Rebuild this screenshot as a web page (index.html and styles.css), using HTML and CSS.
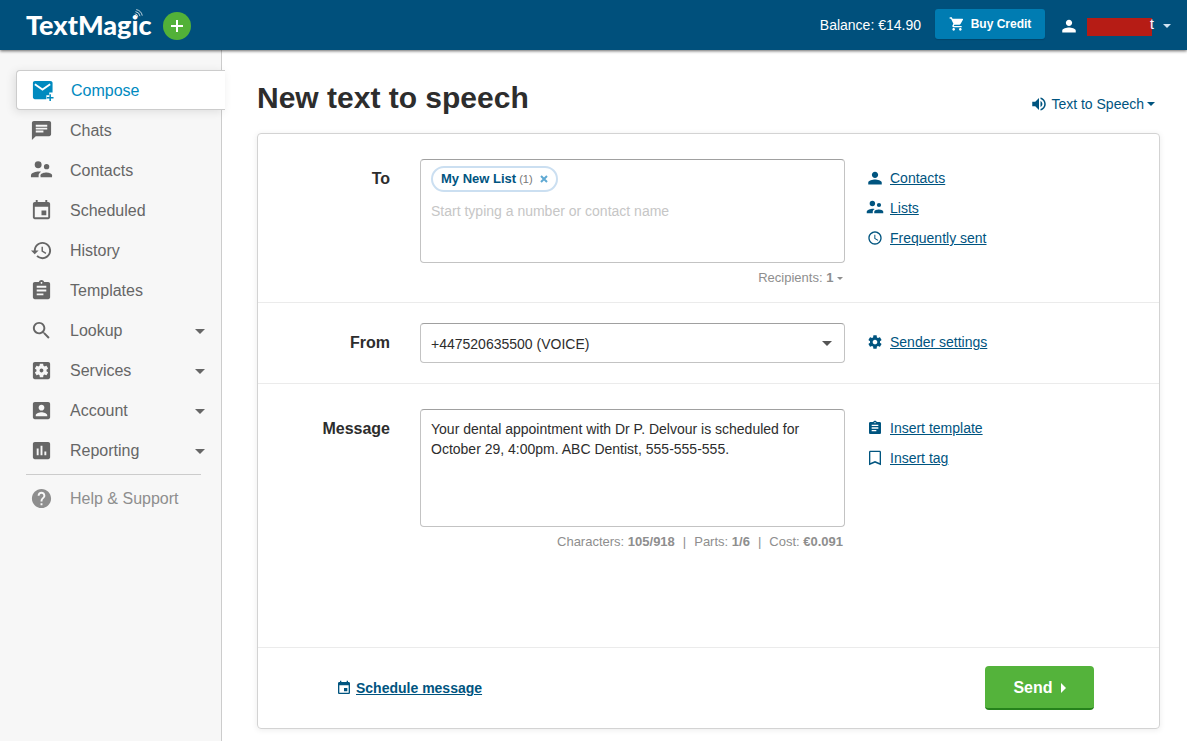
FILE: index.html
```
<!DOCTYPE html>
<html lang="en">
<head>
<meta charset="utf-8">
<title>New text to speech</title>
<link rel="stylesheet" href="styles.css">
</head>
<body>
<svg class="sprite" aria-hidden="true">
  <symbol id="i-compose" viewBox="0 0 24 24"><path d="M20 2H4c-1.100 0-2 .9-2 2v15c0 1.100.9 2 2 2h12v-4h3v-3h3.500V4c0-1.100-.9-2-2.500-2z"/><path d="M4 5.500l8 5.500 8-5.500" fill="none" stroke="#fff" stroke-width="2"/><path d="M19.200 16h1.600v2.700H23.500v1.600h-2.700V23h-1.600v-2.700h-2.700v-1.600h2.700z"/></symbol>
  <symbol id="i-chat" viewBox="0 0 24 24"><path d="M20 2H4c-1.100 0-1.990.9-1.990 2L2 22l4-4h14c1.100 0 2-.9 2-2V4c0-1.100-.9-2-2-2zM6 9h12v2H6V9zm8 5H6v-2h8v2zm4-6H6V6h12v2z"/></symbol>
  <symbol id="i-people" viewBox="0 0 24 24"><circle cx="8.500" cy="6" r="3.600"/><circle cx="17.300" cy="8" r="2.800"/><path d="M17 14c-1.830 0-6 .9-6 2.900V19h12v-2.100c0-2-4.170-2.900-6-2.900z"/><path d="M9 13c-2.500 0-8 1.200-8 4v2h8v-2.100c0-1 .4-2.400 2.600-3.700C10.600 13 9.700 13 9 13z"/></symbol>
  <symbol id="i-calendar" viewBox="0 0 24 24"><path d="M17 12h-5v5h5v-5zM16 1v2H8V1H6v2H5c-1.110 0-1.990.9-1.990 2L3 19c0 1.100.89 2 2 2h14c1.100 0 2-.9 2-2V5c0-1.100-.9-2-2-2h-1V1h-2zm3 18H5V8h14v11z"/></symbol>
  <symbol id="i-history" viewBox="0 0 24 24"><path d="M13 3c-4.970 0-9 4.030-9 9H1l3.890 3.890.07.14L9 12H6c0-3.870 3.130-7 7-7s7 3.130 7 7-3.130 7-7 7c-1.930 0-3.680-.79-4.940-2.060l-1.420 1.420C8.270 19.990 10.510 21 13 21c4.970 0 9-4.030 9-9s-4.030-9-9-9zm-1 5v5l4.280 2.540.72-1.210-3.500-2.080V8H12z"/></symbol>
  <symbol id="i-clipboard" viewBox="0 0 24 24"><path d="M19 3h-4.180C14.400 1.840 13.300 1 12 1c-1.300 0-2.400.84-2.820 2H5c-1.100 0-2 .9-2 2v14c0 1.100.9 2 2 2h14c1.100 0 2-.9 2-2V5c0-1.100-.9-2-2-2zm-7 0c.55 0 1 .45 1 1s-.45 1-1 1-1-.45-1-1 .45-1 1-1zm2 14H7v-2h7v2zm3-4H7v-2h10v2zm0-4H7V7h10v2z"/></symbol>
  <symbol id="i-search" viewBox="0 0 24 24"><path d="M15.500 14h-.79l-.28-.27C15.410 12.590 16 11.110 16 9.500 16 5.910 13.090 3 9.500 3S3 5.910 3 9.500 5.910 16 9.500 16c1.610 0 3.090-.59 4.230-1.570l.27.28v.79l5 4.990L20.490 19l-4.990-5zm-6 0C7.010 14 5 11.990 5 9.500S7.010 5 9.500 5 14 7.010 14 9.500 11.990 14 9.500 14z"/></symbol>
  <symbol id="i-services" viewBox="0 0 24 24"><path d="M12 10c-1.100 0-2 .9-2 2s.9 2 2 2 2-.9 2-2-.9-2-2-2zm7-7H5c-1.110 0-2 .9-2 2v14c0 1.100.89 2 2 2h14c1.110 0 2-.9 2-2V5c0-1.100-.89-2-2-2zm-1.750 9c0 .23-.02.46-.05.68l1.480 1.160c.13.11.17.3.08.45l-1.400 2.420c-.09.15-.27.21-.43.15l-1.740-.7c-.36.28-.76.51-1.180.69l-.26 1.850c-.03.17-.18.3-.35.3h-2.800c-.17 0-.32-.13-.35-.29l-.26-1.850c-.43-.18-.82-.41-1.180-.69l-1.740.7c-.16.06-.34 0-.43-.15l-1.400-2.420c-.09-.15-.05-.34.08-.45l1.480-1.160c-.03-.23-.05-.46-.05-.69 0-.23.02-.46.05-.68l-1.480-1.160c-.13-.11-.17-.3-.08-.45l1.400-2.420c.09-.15.27-.21.43-.15l1.740.7c.36-.28.76-.51 1.180-.69l.26-1.850c.03-.17.18-.3.35-.3h2.800c.17 0 .32.13.35.29l.26 1.850c.43.18.82.41 1.180.69l1.740-.7c.16-.06.34 0 .43.15l1.400 2.420c.09.15.05.34-.08.45l-1.480 1.160c.03.23.05.46.05.69z"/></symbol>
  <symbol id="i-account" viewBox="0 0 24 24"><path d="M3 5v14c0 1.100.89 2 2 2h14c1.100 0 2-.9 2-2V5c0-1.100-.9-2-2-2H5c-1.110 0-2 .9-2 2zm12 4c0 1.660-1.340 3-3 3s-3-1.340-3-3 1.340-3 3-3 3 1.340 3 3zm-9 8c0-2 4-3.100 6-3.100s6 1.100 6 3.100v1H6v-1z"/></symbol>
  <symbol id="i-report" viewBox="0 0 24 24"><path d="M19 3H5c-1.100 0-2 .9-2 2v14c0 1.100.9 2 2 2h14c1.100 0 2-.9 2-2V5c0-1.100-.9-2-2-2zM9 17H7v-7h2v7zm4 0h-2V7h2v10zm4 0h-2v-4h2v4z"/></symbol>
  <symbol id="i-help" viewBox="0 0 24 24"><path d="M12 2C6.480 2 2 6.480 2 12s4.480 10 10 10 10-4.480 10-10S17.520 2 12 2zm1 17h-2v-2h2v2zm2.070-7.750l-.9.920C13.450 12.900 13 13.500 13 15h-2v-.5c0-1.100.45-2.100 1.170-2.830l1.240-1.260c.37-.36.59-.86.59-1.410 0-1.100-.9-2-2-2s-2 .9-2 2H8c0-2.210 1.790-4 4-4s4 1.790 4 4c0 .88-.36 1.680-.93 2.250z"/></symbol>
  <symbol id="i-person" viewBox="0 0 24 24"><path d="M12 12c2.400 0 4.200-1.900 4.200-4.200S14.400 3.500 12 3.500 7.800 5.500 7.800 7.800 9.600 12 12 12zm0 2c-3 0-9 1.300-9 4v2.500h18V18c0-2.700-6-4-9-4z"/></symbol>
  <symbol id="i-cart" viewBox="0 0 24 24"><path d="M7 18c-1.100 0-1.990.9-1.990 2S5.900 22 7 22s2-.9 2-2-.9-2-2-2zM1 2v2h2l3.600 7.590-1.350 2.450c-.16.28-.25.61-.25.96 0 1.100.9 2 2 2h12v-2H7.420c-.14 0-.25-.11-.25-.25l.03-.12.9-1.630h7.450c.75 0 1.410-.41 1.750-1.030l3.580-6.490A1 1 0 0 0 20 4H5.210l-.94-2H1zm16 16c-1.100 0-1.990.9-1.990 2s.89 2 1.990 2 2-.9 2-2-.9-2-2-2z"/></symbol>
  <symbol id="i-speaker" viewBox="0 0 24 24"><path d="M3 9v6h4l5 5V4L7 9H3zm13.500 3c0-1.770-1.020-3.290-2.500-4.030v8.050c1.480-.73 2.500-2.250 2.500-4.020zM14 3.230v2.060c2.890.86 5 3.540 5 6.710s-2.110 5.850-5 6.710v2.060c4.010-.91 7-4.490 7-8.770s-2.990-7.860-7-8.770z"/></symbol>
  <symbol id="i-clock" viewBox="0 0 24 24"><path d="M12 2C6.500 2 2 6.500 2 12s4.500 10 10 10 10-4.500 10-10S17.500 2 12 2zm0 18c-4.420 0-8-3.580-8-8s3.580-8 8-8 8 3.580 8 8-3.580 8-8 8zm.5-13H11v6l5.200 3.200.8-1.300-4.500-2.700V7z"/></symbol>
  <symbol id="i-gear" viewBox="0 0 24 24"><path d="M19.430 12.980c.04-.32.070-.64.070-.98s-.03-.66-.07-.98l2.110-1.650c.19-.15.240-.42.120-.64l-2-3.460c-.12-.22-.39-.3-.61-.22l-2.490 1c-.52-.4-1.080-.73-1.690-.98l-.38-2.650C14.460 2.180 14.250 2 14 2h-4c-.25 0-.46.18-.49.42l-.38 2.650c-.61.25-1.170.59-1.690.98l-2.490-1c-.23-.09-.49 0-.61.22l-2 3.460c-.13.22-.07.49.12.64l2.110 1.650c-.04.32-.07.65-.07.98s.03.66.07.98l-2.110 1.650c-.19.15-.24.42-.12.64l2 3.460c.12.22.39.3.61.22l2.490-1c.52.4 1.080.73 1.690.98l.38 2.650c.03.24.24.42.49.42h4c.25 0 .46-.18.49-.42l.38-2.650c.61-.25 1.170-.59 1.690-.98l2.490 1c.23.09.49 0 .61-.22l2-3.460c.12-.22.070-.49-.12-.64l-2.110-1.650zM12 15.500c-1.930 0-3.500-1.570-3.500-3.500s1.570-3.500 3.500-3.500 3.500 1.570 3.500 3.500-1.570 3.500-3.500 3.500z"/></symbol>
  <symbol id="i-tag" viewBox="0 0 24 24"><path d="M19 1H5c-1.100 0-2 .9-2 2v20l9-4 9 4V3c0-1.100-.9-2-2-2zm0 18.500l-7-3-7 3V3h14v16.500z"/></symbol>
</svg>

<header class="topbar">
  <a class="logo" href="#">TextMagic
    <svg class="logo-waves" viewBox="0 0 12 12" aria-hidden="true"><path d="M1 6.500a4 4 0 0 1 4 4M2 3.500a7 7 0 0 1 6 6M3 .8a10 10 0 0 1 8 8"/></svg>
  </a>
  <button class="add" type="button" aria-label="Add"><svg viewBox="0 0 28 28" aria-hidden="true"><path d="M14 8v12M8 14h12"/></svg></button>
  <span class="balance">Balance: €14.90</span>
  <button class="buy" type="button"><svg class="icon icon-16"><use href="#i-cart"/></svg>Buy Credit</button>
  <button class="user" type="button" aria-label="Account menu">
    <svg class="icon icon-18"><use href="#i-person"/></svg>
    <span class="user-name">t</span>
    <span class="caret"></span>
  </button>
</header>

<div class="shell">
  <nav class="sidebar">
    <a class="item active" href="#"><svg class="icon icon-nav"><use href="#i-compose"/></svg>Compose</a>
    <a class="item" href="#"><svg class="icon icon-nav"><use href="#i-chat"/></svg>Chats</a>
    <a class="item" href="#"><svg class="icon icon-nav"><use href="#i-people"/></svg>Contacts</a>
    <a class="item" href="#"><svg class="icon icon-nav"><use href="#i-calendar"/></svg>Scheduled</a>
    <a class="item" href="#"><svg class="icon icon-nav"><use href="#i-history"/></svg>History</a>
    <a class="item" href="#"><svg class="icon icon-nav"><use href="#i-clipboard"/></svg>Templates</a>
    <a class="item" href="#"><svg class="icon icon-nav"><use href="#i-search"/></svg>Lookup<span class="caret caret-lg"></span></a>
    <a class="item" href="#"><svg class="icon icon-nav"><use href="#i-services"/></svg>Services<span class="caret caret-lg"></span></a>
    <a class="item" href="#"><svg class="icon icon-nav"><use href="#i-account"/></svg>Account<span class="caret caret-lg"></span></a>
    <a class="item" href="#"><svg class="icon icon-nav"><use href="#i-report"/></svg>Reporting<span class="caret caret-lg"></span></a>
    <hr class="divider">
    <a class="item muted" href="#"><svg class="icon icon-nav"><use href="#i-help"/></svg>Help &amp; Support</a>
  </nav>

  <main class="main">
    <div class="heading">
      <h1 class="title">New text to speech</h1>
      <button class="mode" type="button"><svg class="icon icon-18"><use href="#i-speaker"/></svg>Text to Speech<span class="caret"></span></button>
    </div>

    <form class="card">
      <div class="row">
        <label class="label" for="to">To</label>
        <div class="field">
          <div class="recipients">
            <span class="chip">My New List <span class="count">(1)</span>
              <button class="remove" type="button" aria-label="Remove My New List"><svg viewBox="0 0 8 8" aria-hidden="true"><path d="M1 1l6 6M7 1l-6 6"/></svg></button>
            </span>
            <input class="to-input" id="to" type="text" placeholder="Start typing a number or contact name">
          </div>
          <div class="hint">Recipients: <b>1</b> <span class="caret caret-sm"></span></div>
        </div>
        <div class="links">
          <div class="link"><svg class="icon icon-18"><use href="#i-person"/></svg><a href="#">Contacts</a></div>
          <div class="link"><svg class="icon icon-18"><use href="#i-people"/></svg><a href="#">Lists</a></div>
          <div class="link"><svg class="icon icon-16"><use href="#i-clock"/></svg><a href="#">Frequently sent</a></div>
        </div>
      </div>

      <div class="row row-from">
        <label class="label" for="from">From</label>
        <div class="field select-wrap">
          <select class="select" id="from"><option>+447520635500 (VOICE)</option></select>
          <span class="caret caret-lg select-caret"></span>
        </div>
        <div class="links">
          <div class="link"><svg class="icon icon-16"><use href="#i-gear"/></svg><a href="#">Sender settings</a></div>
        </div>
      </div>

      <div class="row row-message">
        <label class="label" for="message">Message</label>
        <div class="field">
          <textarea class="textarea" id="message">Your dental appointment with Dr P. Delvour is scheduled for October 29, 4:00pm. ABC Dentist, 555-555-555.</textarea>
          <div class="hint"><span>Characters: <b>105/918</b></span><span class="bar">|</span><span>Parts: <b>1/6</b></span><span class="bar">|</span><span>Cost: <b>€0.091</b></span></div>
        </div>
        <div class="links">
          <div class="link"><svg class="icon icon-16"><use href="#i-clipboard"/></svg><a href="#">Insert template</a></div>
          <div class="link"><svg class="icon icon-16"><use href="#i-tag"/></svg><a href="#">Insert tag</a></div>
        </div>
      </div>

      <div class="actions">
        <div class="schedule"><svg class="icon icon-16"><use href="#i-calendar"/></svg><a href="#">Schedule message</a></div>
        <button class="send" type="button">Send<span class="arrow"></span></button>
      </div>
    </form>
  </main>
</div>
</body>
</html>
```
FILE: styles.css
```
* { box-sizing: border-box; }

body {
  margin: 0;
  min-height: 100vh;
  display: flex;
  flex-direction: column;
  background: #fff;
  color: #2d2d2d;
  font: 14px/20px "Liberation Sans", Arial, sans-serif;
}

button { margin: 0; padding: 0; border: 0; background: none; font: inherit; color: inherit; }
a { color: #00547f; }

.sprite { position: absolute; width: 0; height: 0; }
.icon { flex: none; fill: currentColor; }
.icon-16 { width: 16px; height: 16px; }
.icon-18 { width: 18px; height: 18px; }
.icon-nav { width: 23px; height: 23px; margin: 0 17px 2px 0; }

.caret {
  flex: none;
  display: inline-block;
  border: 4px solid transparent;
  border-top-color: currentColor;
  border-bottom: 0;
}
.caret-sm { border-width: 3px 3px 0; }
.caret-lg { border-width: 5px 5px 0; }

/* Top bar */
.topbar {
  position: relative;
  z-index: 2;
  display: flex;
  align-items: center;
  height: 50px;
  padding: 0 16px 0 26px;
  background: #00507c;
  box-shadow: 0 1px 3px rgba(0, 0, 0, .6);
  color: #fff;
}
.logo {
  position: relative;
  margin-right: 11px;
  color: #fff;
  font: 900 27px/50px Lato, sans-serif;
  text-decoration: none;
}
.logo-waves {
  position: absolute;
  top: 9px;
  right: 9px;
  width: 9px;
  height: 9px;
  fill: none;
  stroke: #fff;
}
.add { width: 28px; height: 28px; margin: 2px auto 0 0; border-radius: 50%; background: #52b138; }
.add svg { display: block; fill: none; stroke: #fff; stroke-width: 2; }
.balance { margin-right: 14px; }
.buy {
  display: flex;
  align-items: center;
  justify-content: center;
  gap: 6px;
  width: 110px;
  height: 30px;
  margin: 0 15px 2px 0;
  border-radius: 3px;
  background: #007cb2;
  box-shadow: 0 1px 1px #00456c;
  font-size: 12px;
  font-weight: bold;
}
.user { display: flex; align-items: center; padding-top: 2px; }
.user-name {
  width: 67px;
  height: 18px;
  margin: 2px 9px 0 9px;
  background: linear-gradient(to right, #b61c15 65px, transparent 65px);
  line-height: 12px;
  text-align: right;
}
.user .caret { color: #cfe3f2; }

/* Sidebar */
.shell { flex: 1; display: flex; }
.sidebar {
  flex: none;
  width: 222px;
  padding: 20px 0 0 16px;
  border-right: 1px solid #ccc;
  background: #f7f7f7;
}
.item {
  display: flex;
  align-items: center;
  height: 40px;
  padding: 2px 16px 0 14px;
  color: #666;
  font-size: 16px;
  text-decoration: none;
}
.item .caret { margin-left: auto; }
.active {
  position: relative;
  margin-right: -4px;
  border: 1px solid #ccc;
  border-right: 0;
  border-radius: 4px 0 0 4px;
  background: #fff;
  box-shadow: -2px 2px 10px rgba(0, 0, 0, .1);
  color: #008abf;
}
.muted { color: #8e8e8e; }
.divider { margin: 4px 20px 3px 10px; border: 0; border-top: 1px solid #ccc; }

/* Main */
.main { flex: 1; min-width: 0; padding: 28px 27px 12px 35px; }
.heading {
  display: flex;
  align-items: center;
  justify-content: space-between;
  height: 55px;
  padding: 0 5px 15px 0;
}
.title { margin: 0; font-size: 30px; line-height: 40px; }
.mode { display: flex; align-items: center; gap: 3px; margin-top: 12px; color: #00547f; }

.card {
  border: 1px solid #d3d3d3;
  border-radius: 4px;
  box-shadow: 0 1px 6px rgba(0, 0, 0, .08);
}
.row {
  display: grid;
  grid-template-columns: 132px minmax(0, 425px) minmax(130px, 1fr);
  padding: 25px 0 14px;
  border-bottom: 1px solid #ebebeb;
  column-gap: 30px;
}
.row-from { padding: 20px 0; }
.row-message { min-height: 264px; }
.label { padding-top: 5px; font-size: 16px; font-weight: bold; line-height: 30px; text-align: right; }

.recipients, .select, .textarea {
  display: block;
  width: 100%;
  border: 1px solid #c3c3c3;
  border-top-color: #a0a0a0;
  border-radius: 4px;
  background: #fff;
  color: #2d2d2d;
  font: inherit;
}
.recipients { height: 104px; padding: 6px 10px; }
.chip {
  display: inline-flex;
  align-items: center;
  height: 26px;
  padding: 0 8px;
  border: 2px solid #cbdff1;
  border-radius: 13px;
  color: #00547f;
  font-size: 13px;
  font-weight: bold;
}
.count { margin-left: 3px; color: #777; font-size: 11px; font-weight: normal; }
.remove { width: 8px; height: 8px; margin-left: 7px; }
.remove svg { display: block; fill: none; stroke: #5fa9d3; stroke-width: 2; }
.to-input { display: block; width: 100%; height: 30px; margin-top: 4px; padding: 0; border: 0; outline: 0; font: inherit; }
.to-input::placeholder { color: #c6c6c6; opacity: 1; }
.hint { margin-top: 5px; padding-right: 2px; color: #8e8e8e; font-size: 13px; line-height: 20px; text-align: right; }
.hint .caret { vertical-align: middle; }
.bar { margin: 0 8px; }

.select-wrap { position: relative; }
.select { height: 40px; padding: 2px 10px 0; appearance: none; }
.select-caret { position: absolute; right: 13px; top: 18px; color: #555; }
.textarea { height: 118px; padding: 9px 10px; resize: none; overflow: hidden; }

.links { padding-top: 4px; margin-left: -9px; }
.link { display: grid; grid-template-columns: 18px 1fr; gap: 6px; align-items: center; justify-items: center; height: 30px; color: #00547f; }
.link a { justify-self: start; }

.actions { display: flex; align-items: center; justify-content: space-between; height: 80px; padding: 0 65px 0 78px; }
.schedule { display: flex; align-items: center; gap: 4px; color: #00547f; font-weight: bold; }
.send {
  display: flex;
  align-items: center;
  justify-content: center;
  gap: 8px;
  width: 109px;
  height: 44px;
  padding-top: 2px;
  border-bottom: 2px solid #25821b;
  border-radius: 4px;
  background: #54b33b;
  color: #fff;
  font-size: 16px;
  font-weight: bold;
}
.arrow { border: 5px solid transparent; border-left-color: currentColor; border-right: 0; }
```
